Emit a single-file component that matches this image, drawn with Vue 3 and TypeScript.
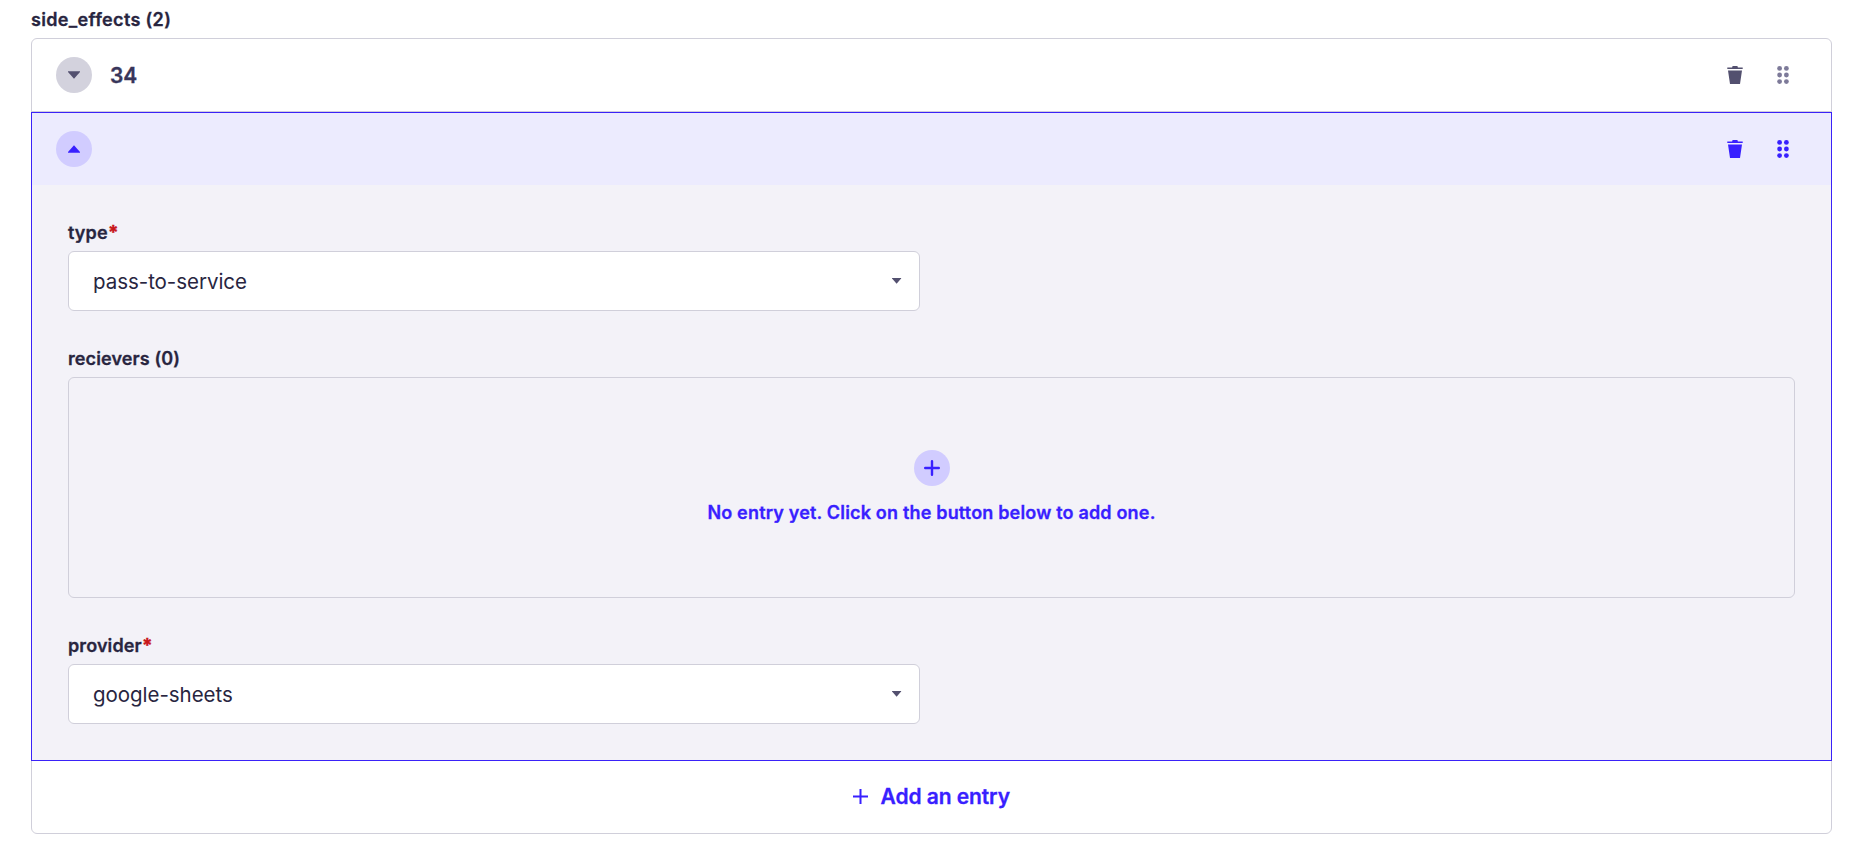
<script setup lang="ts">
interface Entry {
  title: string
  open: boolean
}

const entries: Entry[] = [
  { title: '34', open: false },
  { title: '', open: true },
]
</script>

<template>
  <main class="field">
    <div class="label list-label">side_effects (2)</div>
    <div class="list">
      <section v-for="(entry, i) in entries" :key="i" class="entry" :class="{ open: entry.open }">
        <header class="entry-head">
          <button class="round" type="button" aria-label="Toggle entry">
            <svg width="12" height="8" viewBox="0 0 12 8">
              <path :d="entry.open ? 'M0 7.7V7L6 .3 12 7v.7z' : 'M0 .3V1l6 6.7L12 1V.3z'" />
            </svg>
          </button>
          <span class="title">{{ entry.title }}</span>
          <span class="actions">
            <svg class="trash" width="16" height="18" viewBox="0 0 16 18">
              <path d="M.3 1.4h4.8L5.6 0h4.8l.5 1.4h4.8v1.5H.3zM1 4.4h14L13 18H3z" />
            </svg>
            <svg class="drag" width="12" height="18" viewBox="0 0 12 18">
              <template v-for="y in [2.4, 9, 15.6]" :key="y">
                <circle cx="2.6" :cy="y" r="2.4" />
                <circle cx="9.4" :cy="y" r="2.4" />
              </template>
            </svg>
          </span>
        </header>
        <div v-if="entry.open" class="body">
          <div class="label">type<span class="req">*</span></div>
          <div class="select">
            <span>pass-to-service</span>
            <svg width="10" height="6" viewBox="0 0 10 6"><path d="M.1 0h9v.6L4.6 5.8.1.6z" /></svg>
          </div>
          <div class="label">recievers (0)</div>
          <div class="empty">
            <span class="round">
              <svg width="16" height="16" viewBox="0 0 16 16"><path class="plus heavy" d="M8 1.2v13.6M1.2 8h13.6" /></svg>
            </span>
            <span class="label hint">No entry yet. Click on the button below to add one.</span>
          </div>
          <div class="label">provider<span class="req">*</span></div>
          <div class="select">
            <span>google-sheets</span>
            <svg width="10" height="6" viewBox="0 0 10 6"><path d="M.1 0h9v.6L4.6 5.8.1.6z" /></svg>
          </div>
        </div>
      </section>
      <button class="add" type="button">
        <svg width="16" height="16" viewBox="0 0 16 16"><path class="plus" d="M7.5 0v15M0 7.5h15" /></svg>
        <span>Add an entry</span>
      </button>
    </div>
  </main>
</template>

<style>
body { margin: 0; background: #fff; }
</style>

<style scoped>
.field { box-sizing: border-box; width: 1850px; height: 854px; overflow: hidden; padding: 8px 18px 0 31px; font-family: Inter, "Liberation Sans", sans-serif; color: #28253f; }
.label, .title, .add span { -webkit-text-stroke: 0.3px currentColor; }
.label { height: 24px; line-height: 24px; font-size: 18px; font-weight: 600; letter-spacing: 0.11px; white-space: nowrap; }
.list-label { margin-bottom: 6px; letter-spacing: 0.34px; }
.req { color: #c8171b; font-size: 19px; font-weight: 800; line-height: 1; }
button { border: 0; padding: 0; background: none; font: inherit; }
svg { display: block; fill: currentColor; }
.list { box-sizing: border-box; width: 1801px; height: 796px; border: 1px solid #d0cfda; border-radius: 6px; }
.entry-head { box-sizing: border-box; height: 73px; display: flex; align-items: center; padding: 0 42px 1px 24px; border-bottom: 1px solid #d0cfda; color: #53506f; }
.round { width: 36px; height: 36px; border-radius: 50%; background: #d3d2dd; color: inherit; display: flex; align-items: center; justify-content: center; }
.title { margin-left: 18px; padding-top: 2px; font-size: 21px; font-weight: 600; color: #38355a; }
.actions { margin-left: auto; display: flex; gap: 34px; }
.drag { color: #7d7a99; }
.open { box-sizing: border-box; height: 649px; margin: 0 -1px; border: 1px solid #3a22f8; background: #f3f2f8; }
.open .entry-head { height: 72px; padding-bottom: 0; border: 0; background: #ecebfe; }
.open .round { background: #d1ccff; }
.open .entry-head, .open .drag, .hint { color: #3820ff; }
.body { padding: 36px; }
.body > .label { margin-bottom: 6px; }
.select { box-sizing: border-box; width: 852px; height: 60px; margin-bottom: 36px; padding: 0 17px 0 24px; border: 1px solid #d0cfda; border-radius: 6px; background: #fff; display: flex; align-items: center; justify-content: space-between; font-size: 20.5px; letter-spacing: -0.04px; }
.select svg { color: #53506f; }
.empty { box-sizing: border-box; height: 221px; margin-bottom: 36px; border: 1px solid #d0cfda; border-radius: 6px; display: flex; flex-direction: column; align-items: center; padding-top: 72px; color: #3820ff; }
.hint { margin-top: 15px; letter-spacing: 0.18px; }
.plus { fill: none; stroke: currentColor; stroke-width: 2; }
.heavy { stroke-width: 2.4; stroke-linecap: round; }
.add { width: 100%; height: 71px; display: flex; align-items: center; justify-content: center; gap: 11.5px; font-size: 21px; font-weight: 600; letter-spacing: -0.08px; color: #3820ff; }
</style>
